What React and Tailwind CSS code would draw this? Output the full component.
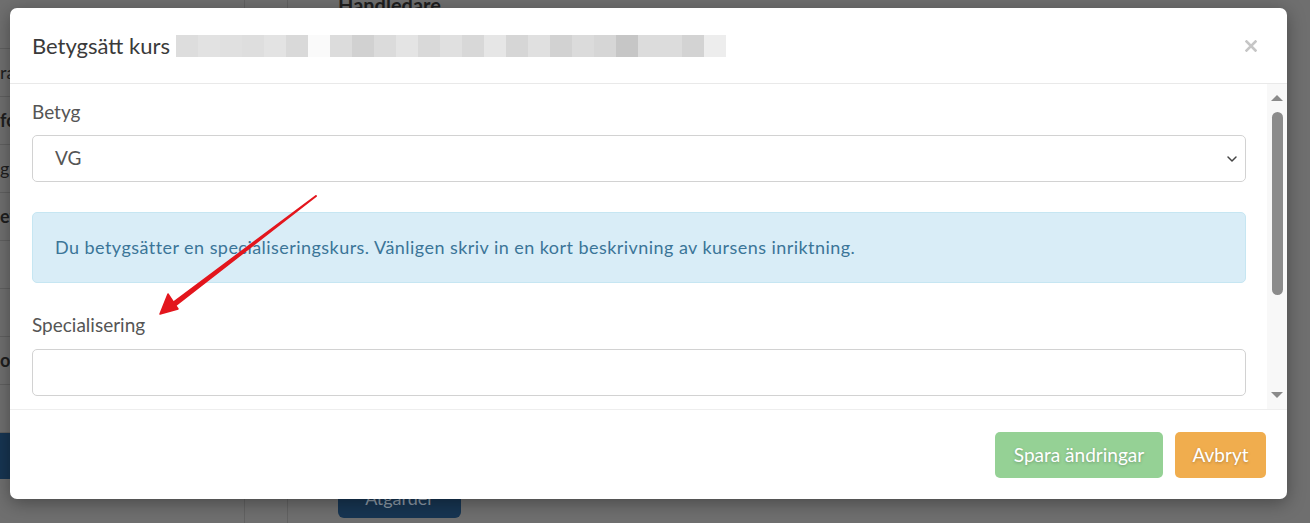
import { ChevronDown } from "lucide-react";

const font = { fontFamily: '"Lato", "Noto Sans", sans-serif' };

const redaction = [
  "bg-[#dddddd]", "bg-[#e2e2e2]", "bg-[#e0e0e0]", "bg-[#dedede]", "bg-[#e3e3e3]",
  "bg-[#d9d9d9]", "bg-[#fafafa]", "bg-[#dcdcdc]", "bg-[#d1d1d1]", "bg-[#dbdbdb]",
  "bg-[#e4e4e4]", "bg-[#d9d9d9]", "bg-[#e0e0e0]", "bg-[#d8d8d8]", "bg-[#e6e6e6]",
  "bg-[#d6d6d6]", "bg-[#e0e0e0]", "bg-[#d2d2d2]", "bg-[#dbdbdb]", "bg-[#d6d6d6]",
  "bg-[#c6c6c6]", "bg-[#dcdcdc]", "bg-[#dcdcdc]", "bg-[#d3d3d3]", "bg-[#ededed]",
];

const leftRows = [
  { t: "ra", b: false },
  { t: "fo", b: true },
  { t: "g", b: false },
  { t: "ef", b: true },
  { t: "", b: false },
  { t: "", b: false },
  { t: "o", b: true },
  { t: "", b: false },
];

const Page = () => (
  <div className="flex h-[523px] w-[1310px] bg-[#6f6f6f]" style={font}>
    <aside className="flex w-[245px] flex-col border-r border-[#626262]">
      <div className="h-[49px] border-b border-[#606060]" />
      {leftRows.map((r, i) => (
        <div
          key={i}
          className={`flex h-[48px] items-center border-b border-[#606060] text-[18px] text-[#1e1e1e] ${r.b ? "font-bold" : "font-normal"}`}
        >
          {r.t}
        </div>
      ))}
      <div className="h-[46px] w-[10px] bg-[#173552]" />
    </aside>
    <div className="w-[43px] border-r border-[#626262]" />
    <main className="flex flex-1 flex-col pl-[50px]">
      <p className="-mt-[10px] text-[20px] font-bold text-[#1f1f1f]">Handledare</p>
      <div className="mt-auto mb-[5px] flex h-[40px] w-[123px] items-center justify-center rounded-b-md bg-[#173552] text-[18px] text-[#8c99a6]">
        Åtgärder
      </div>
    </main>
  </div>
);

const Field = ({ children }) => (
  <div className="flex h-[47px] items-center rounded-[5px] border border-[#d2d2d2] bg-white pl-[22px] pr-[3px] text-[19px] text-[#555]">
    {children}
  </div>
);

const Arrow = () => (
  <svg
    className="pointer-events-none absolute left-0 top-0"
    width="1310"
    height="523"
    viewBox="0 0 1310 523"
  >
    <path d="M316 196 L174 302 L176 305 Z" fill="#e3161d" stroke="#e3161d" strokeWidth="2" strokeLinejoin="round" />
    <path d="M160 314 L168 294 L178 309 Z" fill="#e3161d" stroke="#e3161d" strokeWidth="1.5" strokeLinejoin="round" />
  </svg>
);

const Modal = () => (
  <div className="absolute inset-0 pl-[10px] pt-[8px]" style={font}>
    <div className="flex w-[1277px] flex-col overflow-hidden rounded-[7px] bg-white shadow-[0_4px_18px_rgba(0,0,0,0.35)]">
      <header className="flex h-[76px] items-center border-b border-[#e9e9e9] pl-[22px] pr-[22px]">
        <h2 className="w-[144px] text-[22px] text-[#3a3a3a]">Betygsätt kurs</h2>
        <div className="flex h-[22px]">
          {redaction.map((c, i) => (
            <div key={i} className={`h-[22px] w-[22px] ${c}`} />
          ))}
        </div>
        <svg className="ml-auto mr-[8px]" width="12" height="12" viewBox="0 0 12 12">
          <path d="M1.5 1.5 L10.5 10.5 M10.5 1.5 L1.5 10.5" stroke="#c6c6c6" strokeWidth="2.6" strokeLinecap="square" />
        </svg>
      </header>

      <div className="flex h-[326px] border-b border-[#eeeeee]">
        <div className="flex-1 overflow-hidden pl-[22px] pr-[21px] pt-[14px]">
          <label className="block h-[27px] text-[19px] leading-[27px] text-[#555]">Betyg</label>
          <div className="mt-[10px]">
            <Field>
              <span className="flex-1">VG</span>
              <ChevronDown size={16} strokeWidth={2.2} className="mr-[2px] text-[#444]" />
            </Field>
          </div>
          <div className="mt-[30px] flex h-[71px] items-center rounded-[5px] border border-[#c6e6f2] bg-[#d9edf7] px-[22px] text-[18px] tracking-[0.45px] text-[#3b7598]">
            Du betygsätter en specialiseringskurs. Vänligen skriv in en kort beskrivning av kursens inriktning.
          </div>
          <label className="mt-[28px] block h-[27px] text-[19px] leading-[27px] text-[#555]">
            Specialisering
          </label>
          <div className="mt-[11px]">
            <Field />
          </div>
        </div>
        <div className="flex w-[20px] flex-col items-center bg-[#f8f8f8] py-[11px]">
          <div className="h-0 w-0 border-x-[6px] border-b-[6px] border-x-transparent border-b-[#8a8a8a]" />
          <div className="mt-[11px] h-[183px] w-[11px] rounded-full bg-[#8b8b8b]" />
          <div className="mt-auto h-0 w-0 border-x-[6px] border-t-[6px] border-x-transparent border-t-[#8a8a8a]" />
        </div>
      </div>

      <footer className="flex h-[89px] items-start justify-end gap-[12px] pr-[21px] pt-[22px]">
        <button className="h-[46px] w-[168px] rounded-[5px] bg-[#95d195] text-[19px] text-white [text-shadow:0_1px_3px_rgba(0,0,0,0.25)]">
          Spara ändringar
        </button>
        <button className="h-[46px] w-[91px] rounded-[5px] bg-[#f0ad4e] text-[19px] text-white [text-shadow:0_1px_3px_rgba(0,0,0,0.25)]">
          Avbryt
        </button>
      </footer>
    </div>
  </div>
);

export default function App() {
  return (
    <div className="relative h-[523px] w-[1310px] overflow-hidden">
      <Page />
      <Modal />
      <Arrow />
    </div>
  );
}
